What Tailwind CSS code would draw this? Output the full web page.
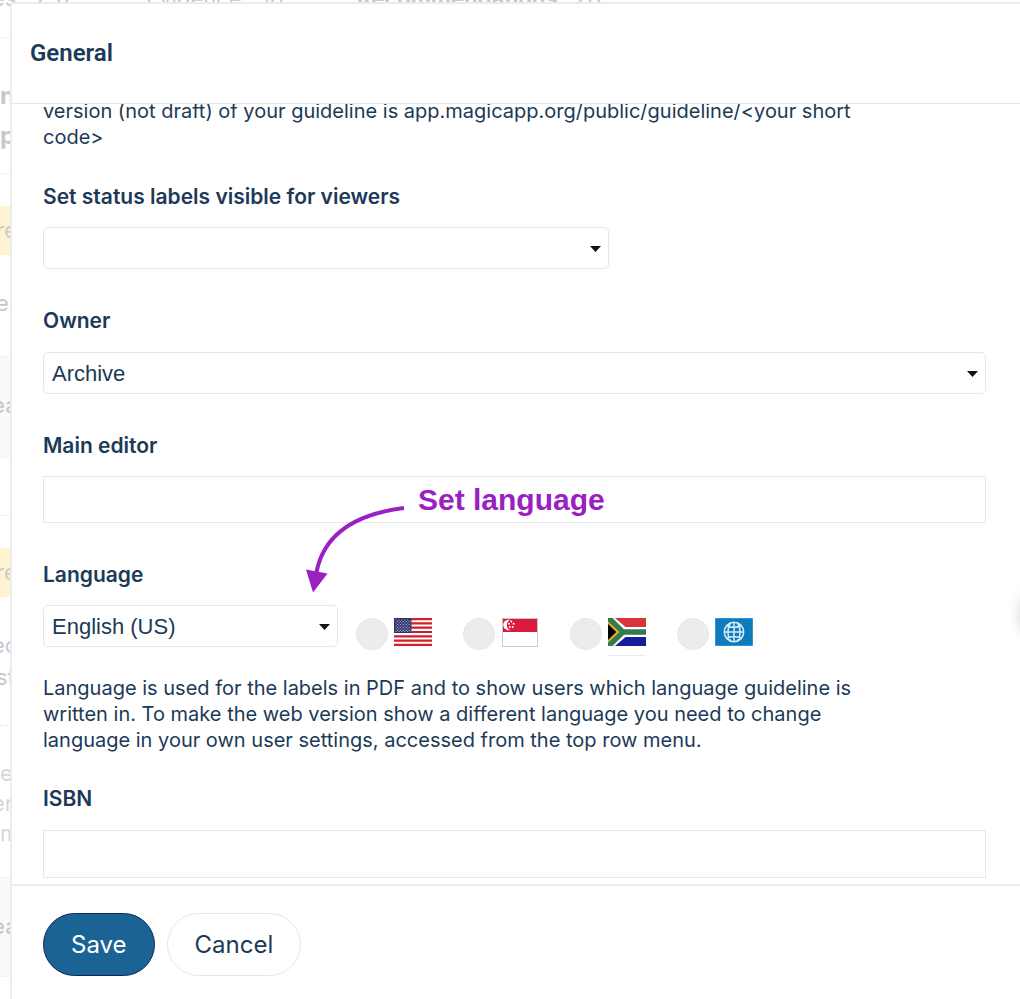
<!DOCTYPE html>
<html lang="en">
<head>
    <meta charset="UTF-8">
    <meta name="viewport" content="width=device-width, initial-scale=1">
    <title>Guideline settings - General</title>
    <script src="https://cdn.jsdelivr.net/npm/@tailwindcss/browser@4"></script>
</head>
<body class="relative h-screen overflow-hidden bg-white font-['Inter',sans-serif] text-[#1c3a57]">

    <!-- Guideline page behind the dialog -->
    <div class="text-[22px] leading-8 text-[#c3c9d1]" aria-hidden="true">
        <div class="flex h-[38px] items-start border-b border-gray-100">
            <div class="-mt-4 flex leading-7 whitespace-nowrap">
                <span class="-ml-2 w-[42px]">es</span>
                <span class="w-28">237</span>
                <span class="w-[115px]">Evidence</span>
                <span class="w-24">18</span>
                <span class="w-[217px] font-bold">Recommendations</span>
                <span>28</span>
            </div>
        </div>
        <div class="h-[136px] border-b border-gray-100 pt-[38px] text-2xl leading-10 font-bold">
            <p>n</p>
            <p>p</p>
        </div>
        <div class="h-[182px] pt-8">
            <p class="-ml-1 h-[49px] bg-[#fff3d1] pt-2 text-[#d0c8c6]">re</p>
            <p class="-ml-1 pt-8">e</p>
        </div>
        <div class="h-[102px] border-y border-gray-100 bg-[#fafafa] pt-8 font-medium"><p class="-ml-2">ea</p></div>
        <div class="h-[58px] border-b border-gray-100"></div>
        <div class="h-[210px] border-b border-dashed border-gray-200 pt-8">
            <p class="-ml-1 h-[49px] bg-[#fff3d1] pt-2 text-[#d0c8c6]">re</p>
            <p class="-ml-2 pt-8">ec</p>
            <p class="-ml-1">st</p>
        </div>
        <div class="h-[151px] pt-8 leading-[30px] text-[#d6d6d6]">
            <p>e</p>
            <p class="-ml-2">er</p>
            <p>m</p>
        </div>
        <div class="h-[100px] border-y border-gray-100 bg-[#fafafa] pt-8 font-medium"><p class="-ml-2">ea</p></div>
    </div>

    <!-- Settings dialog -->
    <form role="dialog" aria-labelledby="dialogTitle" class="absolute top-[2px] right-0 bottom-0 left-[10px] flex flex-col border-t-2 border-l-2 border-[#ebecee] bg-white">
        <header class="flex h-[100px] shrink-0 items-center border-b border-gray-200 px-[18px] pb-0.5">
            <h1 id="dialogTitle" class="font-['Roboto',sans-serif] text-2xl font-semibold">General</h1>
        </header>

        <div class="min-h-0 flex-1 overflow-hidden pr-[34px] pl-[31px]">
            <p class="-mt-1.5 max-w-[820px] text-xl leading-[26px]">version (not draft) of your guideline is app.magicapp.org/public/guideline/&lt;your short code&gt;</p>

            <label for="status" class="mt-[33px] block text-[21px] leading-7 font-semibold">Set status labels visible for viewers</label>
            <div class="relative mt-4 w-3/5">
                <select id="status" class="h-[42px] w-full appearance-none rounded-[5px] border border-gray-200 px-2 font-['Liberation_Sans',sans-serif] text-[22px]">
                    <option></option>
                </select>
                <svg class="pointer-events-none absolute top-[19px] right-2 h-[6px] w-[11px]" viewBox="0 0 11 6"><path d="M0 0h11L5.500 6z" fill="#111"/></svg>
            </div>

            <label for="owner" class="mt-[38px] block text-[21px] leading-7 font-semibold">Owner</label>
            <div class="relative mt-[17px]">
                <select id="owner" class="h-[42px] w-full appearance-none rounded-[5px] border border-gray-200 px-2 font-['Liberation_Sans',sans-serif] text-[22px]">
                    <option>Archive</option>
                </select>
                <svg class="pointer-events-none absolute top-[19px] right-2 h-[6px] w-[11px]" viewBox="0 0 11 6"><path d="M0 0h11L5.500 6z" fill="#111"/></svg>
            </div>

            <label for="editor" class="mt-[38px] block text-[21px] leading-7 font-semibold">Main editor</label>
            <input id="editor" type="text" class="mt-4 block h-[47px] w-full border border-gray-200 px-2 text-[22px]">

            <div class="relative mt-[38px]">
                <label for="language" class="block text-[21px] leading-7 font-semibold">Language</label>
                <div class="mt-4 flex">
                    <div class="relative w-[295px]">
                        <select id="language" class="h-[42px] w-full appearance-none rounded-[5px] border border-gray-200 px-2 font-['Liberation_Sans',sans-serif] text-[22px]">
                            <option>English (US)</option>
                        </select>
                        <svg class="pointer-events-none absolute top-[19px] right-2 h-[6px] w-[11px]" viewBox="0 0 11 6"><path d="M0 0h11L5.500 6z" fill="#111"/></svg>
                    </div>
                    <div class="ml-[18px] flex h-[42px] pt-[13px]">
                        <label class="flex w-[107px] gap-1.5">
                            <input type="radio" name="flag" aria-label="United States" class="size-8 appearance-none rounded-full border border-gray-200 bg-[#ececec]">
                            <svg class="h-7 w-[38px]" viewBox="0 0 38 28">
                                <path fill="#fff" d="M0 0h38v28H0z"/>
                                <path stroke="#cf1f2b" stroke-width="2.150" d="M0 1.080h38M0 5.380h38M0 9.690h38M0 14h38M0 18.310h38M0 22.620h38M0 26.920h38"/>
                                <path fill="#2b3268" d="M0 0h17.500v15H0z"/>
                                <g stroke="#a9adc8" stroke-width="1.200" stroke-dasharray="1.200 1.700">
                                    <path d="M1.500 2h15M1.500 5h15M1.500 8h15M1.500 11h15M1.500 13.500h15"/>
                                    <path d="M3 3.500h13M3 6.500h13M3 9.500h13M3 12.300h13"/>
                                </g>
                            </svg>
                        </label>
                        <label class="flex w-[107px] gap-1.5">
                            <input type="radio" name="flag" aria-label="Singapore" class="size-8 appearance-none rounded-full border border-gray-200 bg-[#ececec]">
                            <svg class="h-[29px] w-[38px]" viewBox="0 0 38 29">
                                <path fill="#fff" d="M1 0h36v29H1z"/>
                                <path fill="#dc1a40" d="M1 0h36v14H1z"/>
                                <path fill="#fff" d="M7.500 1.700a5.300 5.300 0 1 0 1.800 10.300 5.500 5.500 0 0 1 0-10.200z"/>
                                <g fill="#fff">
                                    <circle cx="10.300" cy="3.600" r="1"/><circle cx="8" cy="5.800" r="1"/><circle cx="12.600" cy="5.800" r="1"/><circle cx="8.800" cy="8.900" r="1"/><circle cx="11.700" cy="8.900" r="1"/>
                                </g>
                                <path fill="none" stroke="#c8c8c8" d="M1.500.5h35v28h-35z"/>
                            </svg>
                        </label>
                        <label class="flex w-[107px] gap-1.5">
                            <input type="radio" name="flag" aria-label="South Africa" class="size-8 appearance-none rounded-full border border-gray-200 bg-[#ececec]">
                            <svg class="h-[38px] w-[38px]" viewBox="0 0 38 38">
                                <path fill="#fff" d="M0 0h38v28H0z"/>
                                <path fill="#d8343a" d="M7 0h31v9H17.500z"/>
                                <path fill="#1a1a9e" d="M7 28h31v-9H17.500z"/>
                                <path fill="#327a50" d="M0 0h4.500l11.500 11.300h22v5.400H16L4.500 28H0z"/>
                                <path fill="#e8a92f" d="M0 3.200L11.500 14 0 24.800z"/>
                                <path fill="#000" d="M0 6L8.200 14 0 22z"/>
                                <path fill="#e3edf7" d="M0 37h38v1H0z"/>
                            </svg>
                        </label>
                        <label class="flex gap-1.5">
                            <input type="radio" name="flag" aria-label="International" class="size-8 appearance-none rounded-full border border-gray-200 bg-[#ececec]">
                            <svg class="h-7 w-[38px]" viewBox="0 0 38 28">
                                <path fill="#0d7bbd" stroke="#3c93c8" d="M.5.500h37v27H.5z"/>
                                <g fill="none" stroke="#d9ecf7" stroke-width="1.500">
                                    <circle cx="19" cy="14" r="9.700"/>
                                    <path d="M19 4.300v19.400M9.300 14h19.400M15.500 5c-3.500 5-3.500 13 0 18M22.500 5c3.500 5 3.500 13 0 18M12 7.500c4 2.600 10 2.600 14 0M12 20.500c4-2.600 10-2.600 14 0"/>
                                </g>
                            </svg>
                        </label>
                    </div>
                </div>

                <!-- Callout over the language field -->
                <p class="absolute -top-[81px] left-[375px] font-['Liberation_Sans',sans-serif] text-3xl leading-10 font-bold whitespace-nowrap text-[#9a20c2]">Set language</p>
                <svg class="pointer-events-none absolute -top-[61px] left-[257px] h-[95px] w-[110px]" viewBox="0 0 110 95">
                    <path d="M104 8C56 14 24 34 16.500 72" fill="none" stroke="#9a20c2" stroke-width="4"/>
                    <path d="M6 69.500l21.500 4L13 92.500z" fill="#9a20c2"/>
                </svg>
            </div>

            <p class="mt-7 max-w-[820px] text-xl leading-[26px]">Language is used for the labels in PDF and to show users which language guideline is written in. To make the web version show a different language you need to change language in your own user settings, accessed from the top row menu.</p>

            <label for="isbn" class="mt-8 block text-[21px] leading-7 font-semibold">ISBN</label>
            <input id="isbn" type="text" class="mt-[17px] block h-[48px] w-full border border-gray-200 px-2 text-[22px]">
        </div>

        <footer class="flex h-[115px] shrink-0 items-start gap-3 border-t-2 border-[#ebecee] px-[31px] pt-[27px]">
            <button type="submit" class="h-[63px] rounded-full border border-[#0b2a5c] bg-[#1c6395] px-[27px] text-2xl text-white">Save</button>
            <button type="button" class="h-[63px] rounded-full border border-gray-200 px-[27px] text-2xl">Cancel</button>
        </footer>
    </form>

    <!-- Shadow of the off-screen side handle -->
    <div class="absolute top-[594px] left-full ml-1 h-10 w-10 rounded-full shadow-[0_0_16px_2px_rgba(0,0,0,0.25)]"></div>
</body>
</html>
